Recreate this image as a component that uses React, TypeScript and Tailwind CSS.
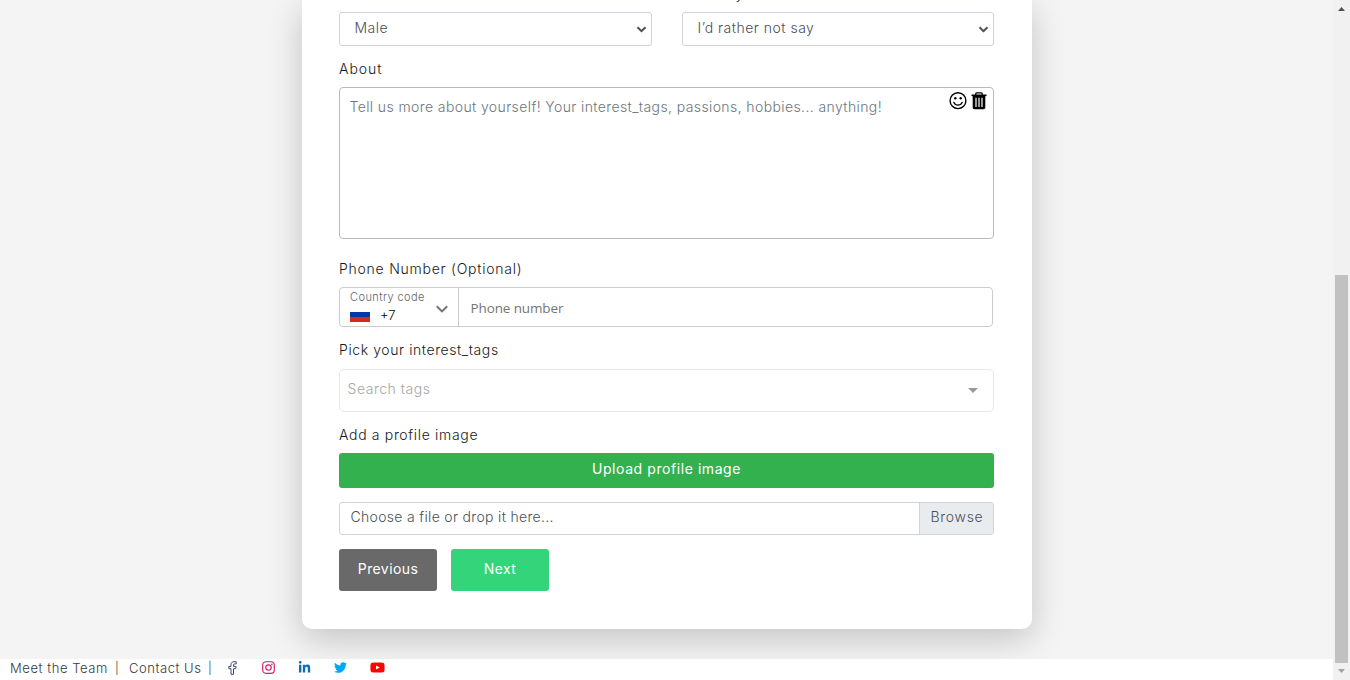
import React from "react";
import { FaTwitter, FaYoutube, FaLinkedinIn } from "react-icons/fa";

function Label({ text, className }: { text: string; className: string }) {
  return (
    <label className={`block whitespace-nowrap pl-[0.5px] text-[14px] leading-[20px] text-[#16191d] ${className}`}>{text}</label>
  );
}

function SelectBox({ value, width, className }: { value: string; width: string; className: string }) {
  return (
    <div className={`flex h-[34px] items-center justify-between rounded-[3px] border border-[#ced4da] bg-white pl-[15px] pr-[4px] text-[14px] leading-[20px] text-[#495057] ${width}`}>
      <span className={`mb-[3px] ${className}`}>{value}</span>
      <svg width="11" height="7" viewBox="0 0 11 7" className="mt-px">
        <path d="M1.5 1.2 5.5 5.2 9.5 1.2" fill="none" stroke="#495057" strokeWidth="2" />
      </svg>
    </div>
  );
}

function SmileIcon() {
  return (
    <svg width="18" height="18" viewBox="0 0 18 18" fill="none" stroke="#000">
      <circle cx="9" cy="8.7" r="7.9" strokeWidth="1.4" />
      <circle cx="6.3" cy="6.3" r="1.2" fill="#000" stroke="none" />
      <circle cx="11.7" cy="6.3" r="1.2" fill="#000" stroke="none" />
      <path d="M4.8 10.3c.8 1.9 2.4 2.9 4.2 2.9s3.4-1 4.2-2.9" strokeWidth="1.3" strokeLinecap="round" />
    </svg>
  );
}

function TrashIcon() {
  return (
    <svg width="16" height="18" viewBox="0 0 16 18" fill="none">
      <path d="M4.7 3V1.900c0-.6.4-1 1-1h4.600c.6 0 1 .4 1 1V3" stroke="#000" strokeWidth="1.3" />
      <path d="M.5 2.500h15v1.600h-15z" fill="#000" />
      <path d="M1.700 4h12.600v11.600c0 1-.7 1.700-1.700 1.700H3.400c-1 0-1.700-.7-1.700-1.700z" fill="#000" />
      <path d="M5 5.800v9.200M8 5.800v9.200M11 5.800v9.200" stroke="#fff" strokeWidth="1.2" />
    </svg>
  );
}

function FacebookIcon() {
  return (
    <svg width="9" height="14" viewBox="0 0 9 14" fill="none" stroke="#3b4a78" strokeWidth="1">
      <path d="M3 13.300V7.700H.8V5.400H3V3.600C3 1.800 4.200.7 5.900.7h2.300v2.200H6.700c-.8 0-1.200.4-1.200 1.100v1.400h2.600l-.4 2.300H5.500v5.600z" />
    </svg>
  );
}

function InstagramIcon() {
  return (
    <svg width="13" height="13" viewBox="0 0 13 13" fill="none" stroke="#d01f6d">
      <rect x=".7" y=".7" width="11.6" height="11.6" rx="3.3" strokeWidth="1.15" />
      <circle cx="6.5" cy="6.5" r="2.7" strokeWidth="1.15" />
      <circle cx="9.9" cy="3.2" r=".8" fill="#d01f6d" stroke="none" />
    </svg>
  );
}

export default function App() {
  return (
    <div className="flex h-[680px] w-[1350px] overflow-hidden bg-[#f4f4f4] font-['Inter',sans-serif] font-light">
      <div className="flex h-full min-w-0 flex-1 flex-col">
        <main className="flex h-[659px] justify-center overflow-hidden">
          <div className="h-[629px] w-[730px] rounded-b-[10px] bg-white pl-[37px] pr-[38px] shadow-[0_10px_34px_rgba(0,0,0,0.2)]">
            <div className="flex h-[12px] items-end justify-end overflow-hidden">
              <Label text="Sexuality" className="mb-[8px] w-[312px] tracking-[0.3px]" />
            </div>
            <div className="flex gap-[30px]">
              <SelectBox value="Male" width="w-[313px]" className="tracking-[0.5px]" />
              <SelectBox value="I’d rather not say" width="w-[312px]" className="tracking-[0.5px]" />
            </div>

            <Label text="About" className="mt-[13px] tracking-[0.95px]" />
            <div className="mt-[8px] flex h-[152px] items-start justify-between rounded-[4px] border border-[#b8bbbe] pl-[10px] pr-[6px]">
              <span className="mt-[9px] whitespace-nowrap text-[14px] leading-[20px] tracking-[0.395px] text-[#6c757d]">
                Tell us more about yourself! Your interest_tags, passions, hobbies... anything!
              </span>
              <div className="mt-[4px] flex gap-[4px]">
                <SmileIcon />
                <TrashIcon />
              </div>
            </div>

            <Label text="Phone Number (Optional)" className="mt-[20px] tracking-[0.76px]" />
            <div className="mr-px mt-[8px] flex h-[40px] rounded-[4px] border border-[#ccc]">
              <div className="flex w-[119px] items-center justify-between border-r border-[#ccc] pl-[10px] pr-[10px]">
                <div className="flex flex-col pb-[2px]">
                  <span className="whitespace-nowrap pl-[0.5px] text-[11px] leading-[18px] tracking-[0.43px] text-[#5f6368]">Country code</span>
                  <div className="flex h-[18px] items-center gap-[10px]">
                    <div className="flex h-[14px] w-[20px] flex-col">
                      <div className="h-[4px] bg-white" />
                      <div className="h-[5px] bg-[#0039a6]" />
                      <div className="h-[5px] bg-[#d52b1e]" />
                    </div>
                    <span className="mb-px pl-[0.5px] text-[13px] leading-[18px] text-black">+7</span>
                  </div>
                </div>
                <svg width="12" height="8" viewBox="0 0 12 8" className="-ml-[10px] mt-[4px]">
                  <path d="M.8 1.2 6 6.4l5.200-5.200" fill="none" stroke="#747474" strokeWidth="2" />
                </svg>
              </div>
              <div className="flex items-center pl-[12px] pt-[3px] font-['Open_Sans','Noto_Sans',sans-serif] text-[13.5px] font-normal tracking-[-0.12px] text-[#757575]">
                Phone number
              </div>
            </div>

            <Label text="Pick your interest_tags" className="mt-[13px] tracking-[0.59px]" />
            <div className="mt-[9px] flex h-[43px] items-center justify-between rounded-[5px] border border-[#e8e8e8] pl-[8px] pr-[15px]">
              <span className="mb-[4px] text-[14px] leading-[20px] tracking-[0.53px] text-[#a5a5a5]">Search tags</span>
              <div className="h-0 w-0 border-x-[5px] border-t-[5px] border-x-transparent border-t-[#999]" />
            </div>

            <Label text="Add a profile image" className="mt-[13px] tracking-[0.67px]" />
            <button className="mt-[8px] flex h-[35px] w-full items-center justify-center rounded-[3px] bg-[#34b14f] pb-[4px] pl-px text-[14px] font-normal leading-[20px] tracking-[0.57px] text-white">
              Upload profile image
            </button>

            <div className="mt-[14px] flex h-[33px] overflow-hidden rounded-[3px] border border-[#ced4da] text-[14px] leading-[20px] text-[#495057]">
              <span className="flex-1 pl-[11px] pt-[4px] tracking-[0.32px]">Choose a file or drop it here...</span>
              <span className="w-[74px] border-l border-[#ced4da] bg-[#e9ecef] pl-[11px] pt-[4px] tracking-[0.7px]">Browse</span>
            </div>

            <div className="mt-[14px] flex gap-[14px] text-[14px] font-normal leading-[20px] tracking-[0.4px] text-white">
              <button className="h-[42px] w-[98px] rounded-[3px] bg-[#696969] pb-[2px] pl-px">Previous</button>
              <button className="h-[42px] w-[98px] rounded-[3px] bg-[#34d57a] pb-[2px] pl-px">Next</button>
            </div>
          </div>
        </main>

        <footer className="flex h-[21px] items-start bg-white pl-[10px] text-[13px] leading-[18px] text-[#343a40]">
          <span className="w-[105px] whitespace-nowrap tracking-[0.58px]">Meet the Team</span>
          <span className="w-[14px] text-[12px]">|</span>
          <span className="w-[79px] whitespace-nowrap tracking-[0.55px]">Contact Us</span>
          <span className="w-[20px] text-[12px]">|</span>
          <div className="flex h-[17px] items-center">
            <div className="w-[34px]"><FacebookIcon /></div>
            <div className="w-[36px]"><InstagramIcon /></div>
            <div className="w-[36px]"><FaLinkedinIn size={13} color="#0a6eb4" /></div>
            <div className="w-[36px]"><FaTwitter size={13} color="#03a9f4" /></div>
            <FaYoutube size={15} color="#ff0000" />
          </div>
        </footer>
      </div>

      <div className="flex w-[17px] flex-col items-center bg-[#f1f1f1]">
        <div className="flex h-[17px] items-center">
          <svg width="7" height="4" viewBox="0 0 7 4"><path d="M0 4 3.500 0 7 4z" fill="#505050" /></svg>
        </div>
        <div className="mt-[258px] h-[388px] w-[13px] bg-[#c1c1c1]" />
        <div className="flex h-[17px] items-center pb-px">
          <svg width="7" height="4" viewBox="0 0 7 4"><path d="M0 0h7L3.500 4z" fill="#a3a3a3" /></svg>
        </div>
      </div>
    </div>
  );
}
